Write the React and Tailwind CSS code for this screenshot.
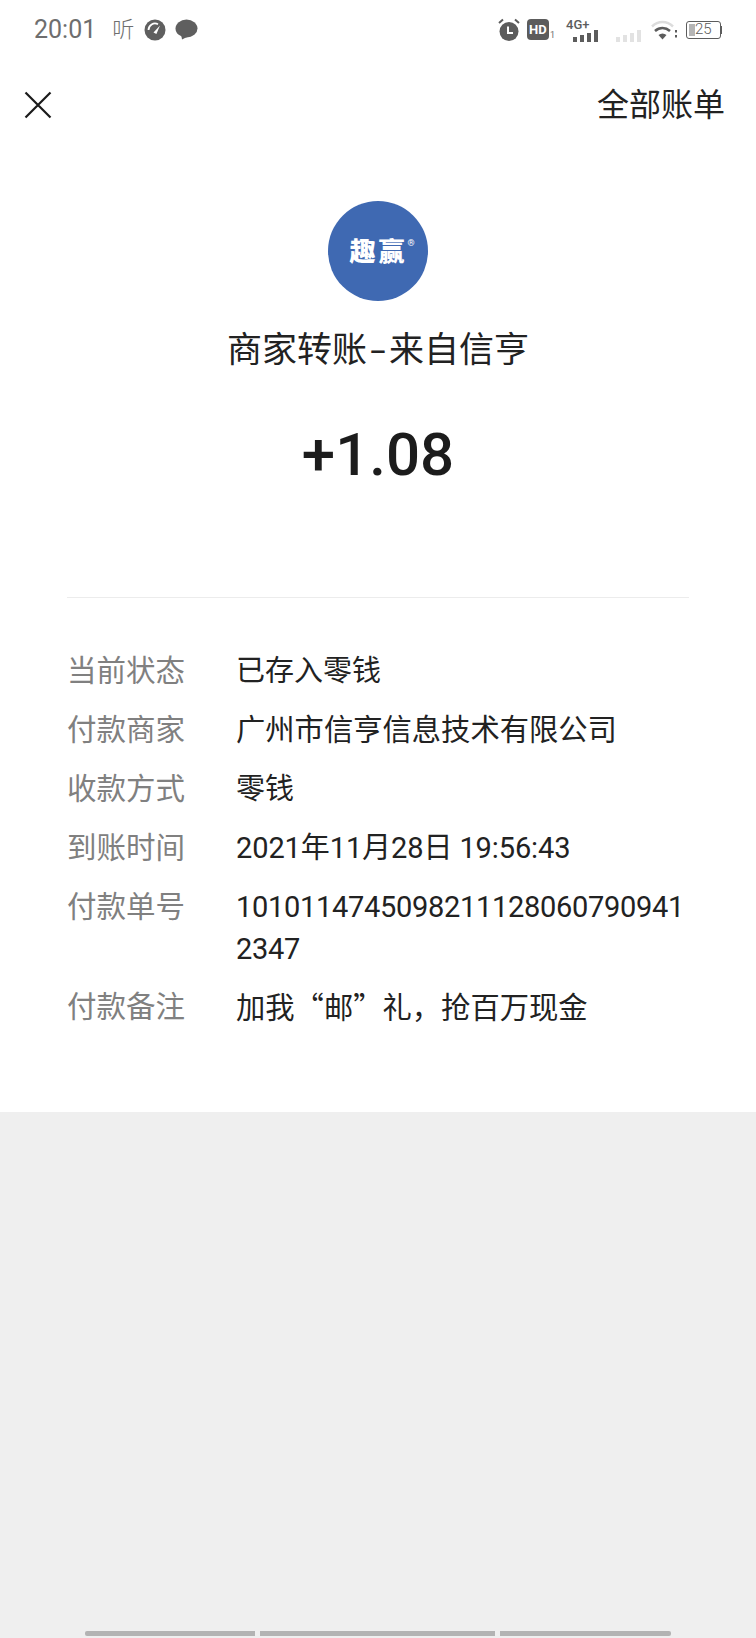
const FONT = "font-['Roboto','Noto_Sans_CJK_SC',sans-serif]";

const rows = [
  { label: "当前状态", value: "已存入零钱" },
  { label: "付款商家", value: "广州市信亨信息技术有限公司", extra: "text-[29.3px]" },
  { label: "收款方式", value: "零钱" },
  { label: "到账时间", value: "2021年11月28日 19:56:43", extra: "tracking-[-0.1px]" },
  { label: "付款单号", value: "10101147450982111280607909412347", extra: "tracking-[-0.3px]" },
  { label: "付款备注", value: "加我“邮”礼，抢百万现金", extra: "-mt-[2px] font-['Noto_Sans_CJK_SC',sans-serif] text-[29.3px]" },
];

const GaugeIcon = () => (
  <svg width="22" height="22" viewBox="0 0 22 22">
    <circle cx="11" cy="11" r="10.5" fill="#5f5f5f" />
    <path d="M4.5 11a6.5 6.5 0 0 1 9.5-5.8" fill="none" stroke="#fff" strokeWidth="1.8" />
    <path d="M9.5 13.5 16 6.5l-3.6 8.4z" fill="#fff" />
  </svg>
);

const ChatIcon = () => (
  <svg width="23" height="21" viewBox="0 0 23 21">
    <ellipse cx="11.5" cy="9.5" rx="11" ry="9" fill="#5f5f5f" />
    <path d="M6 15l1 5.5 6-3z" fill="#5f5f5f" />
  </svg>
);

const AlarmIcon = () => (
  <svg width="22" height="24" viewBox="0 0 22 24">
    <circle cx="11" cy="13.5" r="9.5" fill="#5c5c5c" />
    <path d="M1 5l4-3.5M21 5l-4-3.5" stroke="#5c5c5c" strokeWidth="2" />
    <path d="M10 8.5v6.5h5" fill="none" stroke="#fff" strokeWidth="2" />
  </svg>
);

const SignalBars = ({ color }) => (
  <svg width="26" height="12" viewBox="0 0 26 12">
    <rect x="0" y="7" width="4" height="5" fill={color} />
    <rect x="7" y="5" width="4" height="7" fill={color} />
    <rect x="14" y="3" width="4" height="9" fill={color} />
    <rect x="21" y="0" width="4" height="12" fill={color} />
  </svg>
);

const WifiIcon = () => (
  <svg width="26" height="22" viewBox="0 0 26 22">
    <path d="M1 7.5c6-6 15-6 21 0" fill="none" stroke="#dcdcdc" strokeWidth="2.5" />
    <path d="M4 12c4.5-4 10.5-4 15 0" fill="none" stroke="#5c5c5c" strokeWidth="2.5" />
    <path d="M7.5 16c2.5-2 5.500-2 8 0l-4 4.5z" fill="#5c5c5c" />
    <rect x="24" y="11" width="2" height="2.5" fill="#5c5c5c" />
    <rect x="24" y="16" width="2" height="2.5" fill="#5c5c5c" />
  </svg>
);

const StatusBar = () => (
  <div className="flex h-[58px] items-center justify-between pl-[34px] pr-[34px] pt-[1px] text-[#6e6e6e]">
    <div className="flex items-center">
      <span className="text-[25px] leading-none">20:01</span>
      <span className="ml-[16px] w-[23px] text-[22px] font-light leading-none">听</span>
      <span className="ml-[9px] flex"><GaugeIcon /></span>
      <span className="ml-[9px] flex"><ChatIcon /></span>
    </div>
    <div className="flex items-center">
      <AlarmIcon />
      <div className="ml-[7px] flex items-end">
        <span className="flex h-[21px] w-[22px] items-center justify-center rounded-[4px] bg-[#5c5c5c] text-[13px] font-bold leading-none text-white">HD</span>
        <span className="ml-[1px] text-[9px] leading-none">1</span>
      </div>
      <div className="relative ml-[11px] flex h-[24px] w-[33px] items-end justify-end">
        <span className="absolute left-0 top-0 text-[13px] font-medium leading-none text-[#5c5c5c]">4G+</span>
        <SignalBars color="#5c5c5c" />
      </div>
      <div className="ml-[17px] flex h-[24px] items-end">
        <SignalBars color="#e2e2e2" />
      </div>
      <div className="ml-[9px] flex"><WifiIcon /></div>
      <div className="ml-[9px] flex items-center">
        <div className="flex h-[18px] w-[35px] items-center rounded-[3px] border border-[#5c5c5c] pl-[2px]">
          <span className="h-[12px] w-[6px] bg-[#b5b5b5]" />
          <span className="text-[15px] font-light leading-none text-[#5c5c5c]">25</span>
        </div>
        <span className="h-[8px] w-[1px] bg-[#5c5c5c]" />
      </div>
    </div>
  </div>
);

export default function App() {
  return (
    <div className={`flex h-[1638px] w-[756px] flex-col overflow-hidden bg-[#efefef] ${FONT}`}>
      <div className="h-[1112px] bg-white">
        <StatusBar />

        <div className="flex h-[94px] items-center justify-between pl-[24px] pr-[31px]">
          <svg width="28" height="28" viewBox="0 0 28 28">
            <path d="M1.5 1.5l25 25M26.5 1.5l-25 25" stroke="#1a1a1a" strokeWidth="2.2" />
          </svg>
          <span className="text-[32px] leading-none text-[#222222]">全部账单</span>
        </div>

        <div className="flex flex-col items-center pt-[49px]">
          <div className="flex h-[100px] w-[100px] items-start justify-center gap-[3px] rounded-full bg-[#3f69b2] pl-[8px] pt-[38px] text-white">
            <span className="text-[26px] font-black leading-none">趣</span>
            <span className="text-[26px] font-black leading-none">赢</span>
            <span className="text-[9px] leading-none">®</span>
          </div>
          <div className="mt-[30px] flex text-[35px] leading-[40px] text-[#222222]">
            <span>商家转账</span>
            <span className="inline-block w-[22px] scale-x-[1.6] text-center">-</span>
            <span>来自信亨</span>
          </div>
          <div className="mt-[49px] text-[60px] font-medium leading-[70px] text-[#1c1c1c]">+1.08</div>
        </div>

        <div className="mx-[67px] mt-[107px] border-t border-[#ececec] pt-[44px]">
          {rows.map(({ label, value, extra }) => (
            <div key={label} className="flex py-[8.4px] text-[29px] leading-[42px]">
              <div className="w-[169px] shrink-0 text-[29.5px] text-[#808080]">{label}</div>
              <div lang="zh-CN" className={`w-[452px] break-all text-[#222222] ${extra || ""}`}>{value}</div>
            </div>
          ))}
        </div>
      </div>

      <div className="mt-auto flex h-[7px] justify-center gap-[5px] pb-[2px]">
        <div className="w-[170px] rounded-l-[2px] bg-[#b3b3b3]" />
        <div className="w-[235px] bg-[#b3b3b3]" />
        <div className="w-[171px] rounded-r-[2px] bg-[#b3b3b3]" />
      </div>
    </div>
  );
}
